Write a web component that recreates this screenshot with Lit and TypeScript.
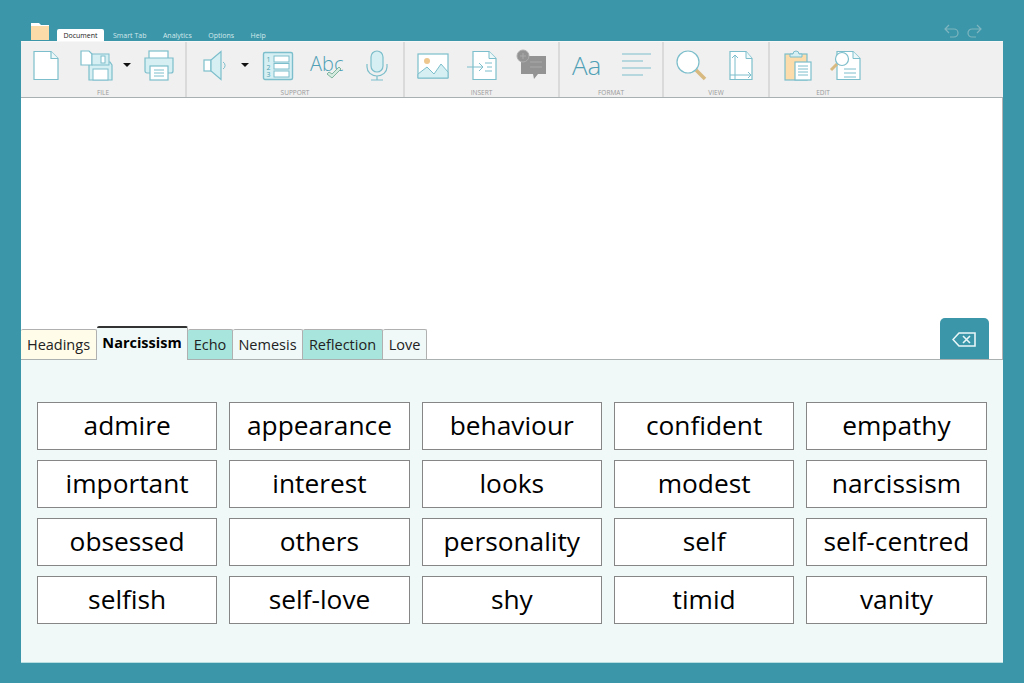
import { LitElement, html, css, svg } from "lit";
import { customElement } from "lit/decorators.js";

const LINE = "#7cbecb";
const TINT = "#d6eff3";
const ICON_FONT = "'Open Sans',sans-serif";

const icons = {
  doc: svg`<path d="M4 2.5h17l7 7v21H4z" fill="#fff" stroke="${LINE}" stroke-width="1.2"/><path d="M21 2.5v7h7" fill="#eef8f9" stroke="${LINE}" stroke-width="1.2"/>`,
  save: svg`<path d="M9 13h21l2 3v15H9z" fill="${TINT}" stroke="${LINE}" stroke-width="1.2"/><rect x="13" y="20" width="15" height="11" fill="#fff" stroke="${LINE}"/><path d="M1 2h8l3 3v11H1z" fill="#fff" stroke="${LINE}" stroke-width="1.2"/><rect x="12" y="5" width="17" height="11" fill="${TINT}" stroke="${LINE}"/><rect x="21" y="7" width="4" height="7" fill="#fff" stroke="${LINE}"/>`,
  print: svg`<rect x="6" y="2" width="19" height="9" fill="#fff" stroke="${LINE}" stroke-width="1.2"/><path d="M2 9h28v13a2 2 0 0 1-2 2H4a2 2 0 0 1-2-2z" fill="${TINT}" stroke="${LINE}" stroke-width="1.2"/><rect x="7" y="17" width="18" height="14" fill="#fff" stroke="${LINE}" stroke-width="1.2"/><path d="M11 21h10M11 24h10M11 27h10" stroke="${LINE}"/>`,
  speaker: svg`<rect x="5" y="11" width="7" height="11" fill="#fff" stroke="${LINE}" stroke-width="1.2"/><path d="M12 11L22 2.5v28L12 22z" fill="${TINT}" stroke="${LINE}" stroke-width="1.2"/><path d="M24 13a4 4 0 0 1 0 7" fill="none" stroke="${LINE}"/>`,
  list: svg`<rect x="1.500" y="3.500" width="29" height="27" rx="1.500" fill="${TINT}" stroke="${LINE}" stroke-width="1.400"/><rect x="12" y="7" width="15" height="6" fill="#fff" stroke="${LINE}"/><rect x="12" y="14.500" width="15" height="5.500" fill="#fff" stroke="${LINE}"/><rect x="12" y="22" width="15" height="6" fill="#fff" stroke="${LINE}"/><text x="4.500" y="13" font-family="${ICON_FONT}" font-size="7" fill="#4f9fb0">1</text><text x="4.500" y="20.500" font-family="${ICON_FONT}" font-size="7" fill="#4f9fb0">2</text><text x="4.500" y="28" font-family="${ICON_FONT}" font-size="7" fill="#4f9fb0">3</text>`,
  check: svg`<text x="0" y="22" font-family="${ICON_FONT}" font-size="20" font-weight="300" fill="#4f9fb5">Abc</text><path d="M17 25l5 4 9-9-2-2-7 7-3-2z" fill="#d5ebe0" stroke="#80b5a0"/>`,
  mic: svg`<rect x="10" y="2" width="12" height="21" rx="6" fill="${TINT}" stroke="${LINE}" stroke-width="1.200"/><path d="M6 15v3a10 9 0 0 0 20 0v-3M16 27v4M10 31h12" fill="none" stroke="${LINE}" stroke-width="1.200"/>`,
  image: svg`<rect x="1" y="5" width="30" height="24" fill="#fff" stroke="${LINE}" stroke-width="1.200"/><circle cx="10" cy="12" r="3" fill="#eec78f"/><path d="M1 25l9-7 7 7 7-10 7 8v6H1z" fill="${TINT}" stroke="${LINE}"/>`,
  insert: svg`<path d="M7 2.500h16l7 7v21H7z" fill="#fff" stroke="${LINE}" stroke-width="1.200"/><path d="M23 2.500v7h7" fill="#eef8f9" stroke="${LINE}"/><path d="M1 18h16M13 14l4 4-4 4M19 14h7M21 18h5M19 22h7" fill="none" stroke="${LINE}"/>`,
  comment: svg`<path d="M5 7h25v18H22l-4 5-1-5H5z" fill="#939393"/><circle cx="7" cy="7" r="6" fill="#939393" stroke="#adadad"/><path d="M7 4v6M4 7h6M14 13h12M14 18h12" stroke="#a9a9a9"/>`,
  font: svg`<text x="1" y="26" font-family="${ICON_FONT}" font-size="26" font-weight="300" fill="#4f9fb5">Aa</text>`,
  align: svg`<path d="M1 5h29M1 12h21M1 19h29M1 26h21" stroke="${LINE}" stroke-width="1.200"/>`,
  zoom: svg`<path d="M21 21l9 9" stroke="#d8b980" stroke-width="3.500"/><circle cx="13" cy="13" r="11" fill="#fff" stroke="${LINE}" stroke-width="1.200"/>`,
  page: svg`<path d="M5 2.500h16l6 7v21H5z" fill="#fff" stroke="${LINE}" stroke-width="1.200"/><path d="M21 2.500v7h6" fill="#eef8f9" stroke="${LINE}"/><path d="M10 30V6M7 9l3-3 3 3M5 26h21M23 23l3 3-3 3" fill="none" stroke="${LINE}"/>`,
  paste: svg`<rect x="2" y="5" width="22" height="26" fill="#fbdcaa" stroke="${LINE}" stroke-width="1.200"/><path d="M7 8V5h3a3 3 0 0 1 6 0h3v3z" fill="${TINT}" stroke="${LINE}"/><rect x="12" y="13" width="16" height="18" fill="#fff" stroke="${LINE}" stroke-width="1.200"/><path d="M15 17h10M15 20h10M15 23h10M15 26h10" stroke="${LINE}"/>`,
  find: svg`<path d="M8 2.500h16l7 7v21H8z" fill="#fff" stroke="${LINE}" stroke-width="1.200"/><path d="M24 2.500v7h7" fill="#eef8f9" stroke="${LINE}"/><path d="M15 20h12M15 24h12M15 28h12" stroke="${LINE}"/><path d="M8 15l-6 6" stroke="#d8b980" stroke-width="3"/><circle cx="13" cy="10" r="6.500" fill="#fff" stroke="${LINE}" stroke-width="1.200"/>`,
};

// gap is the space before each tool
const groups = [
  { label: "FILE", width: 166, pad: 9, tools: [["doc", 0], ["save", 18], ["caret", 11], ["print", 12]] },
  { label: "SUPPORT", width: 218, pad: 12, tools: [["speaker", 0], ["caret", 10], ["list", 13], ["check", 16], ["mic", 19]] },
  { label: "INSERT", width: 155, pad: 12, tools: [["image", 0], ["insert", 17], ["comment", 18]] },
  { label: "FORMAT", width: 104, pad: 11, tools: [["font", 0], ["align", 18]] },
  { label: "VIEW", width: 106, pad: 11, tools: [["zoom", 0], ["page", 18]] },
  { label: "EDIT", width: 233, pad: 13, tools: [["paste", 0], ["find", 14]], labelWidth: 106 },
];

const tabs = [
  { name: "Headings", width: 76, kind: "cream" },
  { name: "Narcissism", width: 91, kind: "active" },
  { name: "Echo", width: 45, kind: "teal" },
  { name: "Nemesis", width: 70, kind: "pale" },
  { name: "Reflection", width: 80, kind: "teal" },
  { name: "Love", width: 44, kind: "pale" },
];

const words = [
  "admire", "appearance", "behaviour", "confident", "empathy",
  "important", "interest", "looks", "modest", "narcissism",
  "obsessed", "others", "personality", "self", "self-centred",
  "selfish", "self-love", "shy", "timid", "vanity",
];

@customElement("app-root")
export class AppRoot extends LitElement {
  static styles = css`
    :host {
      display: block;
      height: 683px;
      box-sizing: border-box;
      padding: 0 21px 20px;
      background: #3a96a8;
      font-family: "Open Sans", "Noto Sans", sans-serif;
    }

    .shell {
      display: flex;
      flex-direction: column;
      height: 100%;
    }

    .titlebar {
      display: flex;
      align-items: flex-end;
      height: 41px;
      flex: none;
    }

    .folder {
      width: 20px;
      height: 18px;
      margin: 0 7px 1px 9px;
    }

    .menu {
      display: flex;
      align-items: flex-end;
      font-size: 7px;
      color: #d4e8ec;
    }

    .menu span {
      height: 12px;
      line-height: 14px;
      padding: 0 8.500px 0 8px;
    }

    .menu .current {
      background: #fff;
      color: #222;
      border-radius: 2px 2px 0 0;
      width: 47px;
      box-sizing: border-box;
      padding: 0;
      text-align: center;
      margin-right: 1px;
    }

    .history {
      margin-left: auto;
      margin-right: 21px;
      display: flex;
      gap: 6px;
      align-self: flex-start;
      padding-top: 23px;
    }

    .history svg {
      width: 16px;
      height: 16px;
      fill: none;
      stroke: #7fb5c0;
      stroke-width: 1.200;
    }

    .window {
      flex: 1;
      display: flex;
      flex-direction: column;
      background: #fff;
      min-height: 0;
    }

    .ribbon {
      display: flex;
      height: 57px;
      flex: none;
      box-sizing: border-box;
      background: #f0f0f0;
      border-top: 1px solid #f7f7f7;
      border-bottom: 1px solid #a9b0b2;
    }

    .group {
      box-sizing: border-box;
      border-right: 2px solid #dadada;
      display: flex;
      flex-direction: column;
    }

    .group:last-child {
      border-right: none;
    }

    .tools {
      display: flex;
      align-items: center;
      height: 32px;
      margin-top: 7px;
    }

    .tools svg {
      width: 32px;
      height: 32px;
      flex: none;
      overflow: visible;
    }

    .caret {
      width: 0;
      height: 0;
      flex: none;
      border: 4px solid transparent;
      border-top-color: #111;
      border-bottom: 0;
    }

    .label {
      margin-top: 8px;
      font-size: 6.500px;
      line-height: 8px;
      color: #9a9a9a;
      text-align: center;
    }

    .editor {
      flex: 1;
      display: flex;
      align-items: flex-end;
      border-right: 1px solid #b5b5b5;
    }

    .tab {
      box-sizing: border-box;
      height: 30px;
      line-height: 29px;
      text-align: center;
      font-size: 14.500px;
      color: #222;
      border: 1px solid #b0b0b0;
      border-bottom: none;
      border-left-width: 0;
      border-radius: 2px 2px 0 0;
    }

    .tab.cream {
      background: #fffdea;
    }

    .tab.pale {
      background: #f0f9f8;
    }

    .tab.teal {
      background: #a8e6dd;
    }

    .tab.active {
      height: 34px;
      margin-bottom: -1px;
      position: relative;
      background: #f0f9f8;
      border-top: 2px solid #333;
      font-weight: 700;
      color: #000;
    }

    .erase {
      margin-left: auto;
      margin-right: 13px;
      width: 49px;
      height: 41px;
      display: flex;
      align-items: center;
      justify-content: center;
      background: #3a96a8;
      border-radius: 5px 5px 0 0;
    }

    .erase svg {
      width: 25px;
      height: 17px;
      margin-top: 2px;
      fill: none;
      stroke: #e8f6f8;
      stroke-width: 1.600;
    }

    .panel {
      flex: none;
      height: 304px;
      box-sizing: border-box;
      padding: 42px 16.400px 0 16px;
      background: #f0f9f8;
      border-top: 1px solid #aab0b0;
      border-bottom: 1px solid #b9dee2;
    }

    .words {
      display: grid;
      grid-template-columns: repeat(5, 1fr);
      grid-auto-rows: 48px;
      gap: 10px 12px;
    }

    .word {
      display: flex;
      align-items: center;
      justify-content: center;
      box-sizing: border-box;
      padding-bottom: 3px;
      background: #fff;
      border: 1px solid #868686;
      font-size: 26.300px;
      color: #000;
    }
  `;

  private tool(name: string, gap: number) {
    const style = `margin-left:${gap}px`;
    if (name === "caret") {
      return html`<div class="caret" style=${style}></div>`;
    }
    return html`<svg viewBox="0 0 32 32" style=${style}>
      ${icons[name as keyof typeof icons]}
    </svg>`;
  }

  render() {
    return html`
      <div class="shell">
        <div class="titlebar">
          <svg class="folder" viewBox="0 0 20 18">
            <path d="M1 1h8l2 2h8v2H1z" fill="#fff" />
            <path d="M1 4h18v14H1z" fill="#fbdba8" />
          </svg>
          <div class="menu">
            <span class="current">Document</span>
            <span>Smart Tab</span>
            <span>Analytics</span>
            <span>Options</span>
            <span>Help</span>
          </div>
          <div class="history">
            <svg viewBox="0 0 16 16">
              <path d="M5 2L1 6l4 4M1 6h9a4 4 0 0 1 0 8H6" />
            </svg>
            <svg viewBox="0 0 16 16">
              <path d="M11 2l4 4-4 4M15 6H6a4 4 0 0 0 0 8h4" />
            </svg>
          </div>
        </div>
        <div class="window">
          <div class="ribbon">
            ${groups.map(
              (g) => html`
                <div class="group" style="width:${g.width}px">
                  <div class="tools" style="padding-left:${g.pad}px">
                    ${g.tools.map(([n, gap]) => this.tool(n as string, gap as number))}
                  </div>
                  <div class="label" style=${g.labelWidth ? `width:${g.labelWidth}px` : ""}>
                    ${g.label}
                  </div>
                </div>
              `
            )}
          </div>
          <div class="editor">
            ${tabs.map(
              (t) => html`<div class="tab ${t.kind}" style="width:${t.width}px">${t.name}</div>`
            )}
            <div class="erase">
              <svg viewBox="0 0 25 17">
                <path d="M7 2h16v13H7L1 8.500z" />
                <path d="M11 5l7 7M18 5l-7 7" />
              </svg>
            </div>
          </div>
          <div class="panel">
            <div class="words">
              ${words.map((w) => html`<div class="word">${w}</div>`)}
            </div>
          </div>
        </div>
      </div>
    `;
  }
}

declare global {
  interface HTMLElementTagNameMap {
    "app-root": AppRoot;
  }
}
